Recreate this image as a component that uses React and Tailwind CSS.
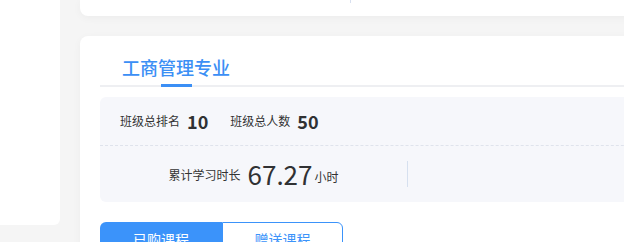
import React from 'react';

const font = { fontFamily: '"Noto Sans CJK SC", "Noto Sans", sans-serif' };

const Stat = ({ label, value }) => (
    <div className="flex items-center">
        <span className="text-[12px] text-[#333]">{label}</span>
        <span className="ml-[7px] text-[18px] font-bold text-[#303133] leading-none">{value}</span>
    </div>
);

const App = () => {
    return (
        <div className="w-[624px] h-[242px] bg-[#f5f5f5] flex overflow-hidden" style={font}>
            <div className="w-[60px] h-[225px] shrink-0 bg-white rounded-br-md"></div>

            <div className="ml-[20px] w-[660px] shrink-0 flex flex-col">
                <div className="h-[16px] shrink-0 bg-white rounded-b-lg shadow-[0_2px_8px_rgba(0,0,0,0.04)] flex">
                    <div className="ml-[270px] w-px h-[3px] bg-[#d8e0f0]"></div>
                </div>

                <div className="mt-[20px] shrink-0 bg-white rounded-t-lg px-[20px] pb-[20px] shadow-[0_2px_8px_rgba(0,0,0,0.04)]">
                    <div className="h-[51px] border-b-2 border-[#eeeff2] flex items-end">
                        <div className="ml-[22px] flex flex-col items-center">
                            <span className="text-[18px] leading-none text-[#3b8ff5] font-medium">工商管理专业</span>
                            <span className="mt-[8px] -mb-[2px] w-[31px] h-[3px] bg-[#3b8ff5]"></span>
                        </div>
                    </div>

                    <div className="mt-[10px] w-[614px] h-[105px] bg-[#f6f7fb] rounded-md flex flex-col">
                        <div className="h-[49px] flex items-center gap-[22px] pl-[20px] border-b border-dashed border-[#dfe3ec]">
                            <Stat label="班级总排名" value="10" />
                            <Stat label="班级总人数" value="50" />
                        </div>
                        <div className="flex-1 flex items-center">
                            <div className="w-[307px] flex items-end justify-center">
                                <span className="text-[12px] text-[#333] mb-[3px]">累计学习时长</span>
                                <span className="ml-[7px] text-[26px] leading-none text-[#303133]">67.27</span>
                                <span className="ml-[2px] text-[12px] text-[#333] mb-[1px]">小时</span>
                            </div>
                            <div className="w-px h-[26px] bg-[#d6e0ef]"></div>
                        </div>
                    </div>

                    <div className="mt-[20px] flex">
                        <button className="w-[122px] h-[34px] bg-[#3b93fa] text-white text-[14px] rounded-tl-md">已购课程</button>
                        <button className="w-[121px] h-[34px] bg-white text-[#3b93fa] text-[14px] border border-[#3b93fa] rounded-tr-md">赠送课程</button>
                    </div>
                </div>
            </div>
        </div>
    );
};

export default App;
